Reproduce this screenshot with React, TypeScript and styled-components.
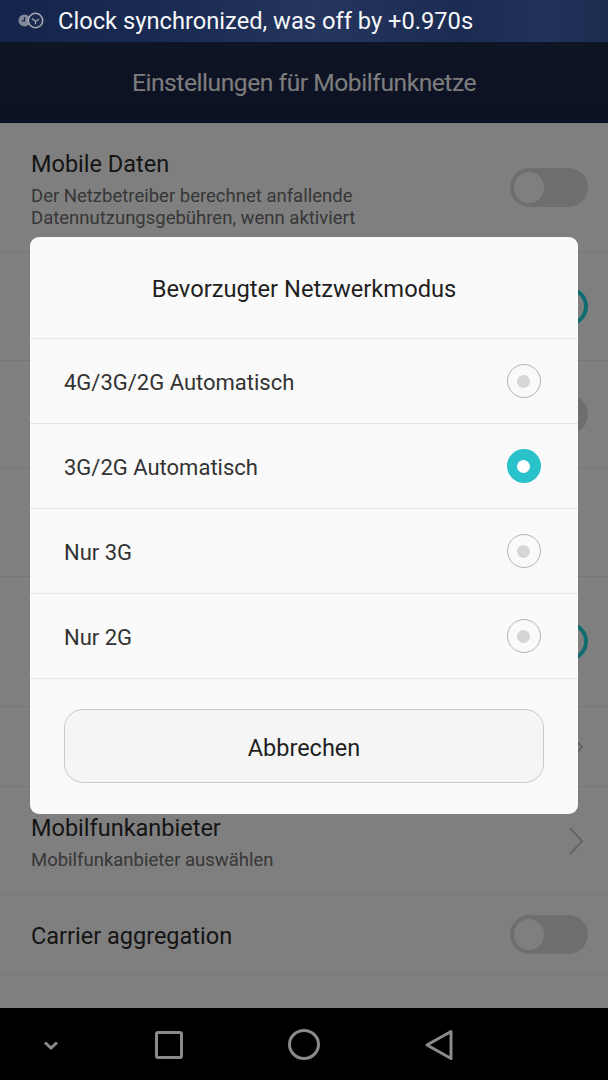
import styled, { createGlobalStyle } from "styled-components";

const GlobalStyle = createGlobalStyle`
  html, body {
    margin: 0;
    padding: 0;
    background: #000;
  }
  * {
    box-sizing: border-box;
  }
`;

const Phone = styled.div`
  position: relative;
  width: 608px;
  height: 1080px;
  display: flex;
  flex-direction: column;
  overflow: hidden;
  font-family: Roboto, "Liberation Sans", sans-serif;
`;

const StatusBar = styled.div`
  height: 42px;
  flex: none;
  display: flex;
  align-items: center;
  gap: 14px;
  padding: 0 0 0 18px;
  color: #f6f7f9;
  font-size: 23.7px;
  background: linear-gradient(90deg, #15244a 0%, #1a2b54 30%, #25365e 52%, #1b2b52 76%, #22335b 90%, #1c2c50 100%);
`;

const Screen = styled.div`
  position: relative;
  flex: 1;
  display: flex;
  flex-direction: column;
  min-height: 0;
`;

const Header = styled.div`
  height: 81px;
  flex: none;
  display: flex;
  align-items: center;
  justify-content: center;
  font-size: 24.6px;
  letter-spacing: -0.45px;
  color: #fafafa;
  background: linear-gradient(180deg, #1e2a48 0%, #182447 100%);
`;

const List = styled.div`
  flex: 1;
  background: #ffffff;
`;

const Row = styled.div<{ $height: number }>`
  height: ${(p) => p.$height}px;
  display: flex;
  align-items: center;
  justify-content: space-between;
  padding: 0 20px 0 31px;
  border-bottom: 1px solid #ececec;
`;

const RowText = styled.div`
  display: flex;
  flex-direction: column;
  gap: 7px;
  padding-top: 3px;
`;

const RowTitle = styled.div`
  font-size: 23.5px;
  color: #2a2a2a;
`;

const RowDesc = styled.div`
  font-size: 18.5px;
  line-height: 22px;
  color: #6e6e6e;
`;

const Toggle = styled.div<{ $on?: boolean }>`
  position: relative;
  width: 78px;
  height: 39px;
  border-radius: 20px;
  flex: none;
  background: ${(p) => (p.$on ? "#ffffff" : "#dcdcdc")};
  border: ${(p) => (p.$on ? "4px solid #22d8e0" : "none")};

  &::after {
    content: "";
    position: absolute;
    left: 4px;
    top: 4px;
    width: 30px;
    height: 31px;
    border-radius: 50%;
    background: #ffffff;
    display: ${(p) => (p.$on ? "none" : "block")};
  }
`;

const Chevron = styled.svg`
  width: 16px;
  height: 28px;
  margin-right: 4px;
  flex: none;
`;

const Scrim = styled.div`
  position: absolute;
  inset: 0;
  background: rgba(0, 0, 0, 0.5);
`;

const Dialog = styled.div`
  position: absolute;
  left: 30px;
  top: 195px;
  width: 548px;
  height: 577px;
  background: #fafafa;
  border-radius: 9px;
  display: flex;
  flex-direction: column;
`;

const DialogTitle = styled.div`
  height: 102px;
  flex: none;
  display: flex;
  align-items: center;
  justify-content: center;
  padding-top: 2px;
  font-size: 23.7px;
  color: #1f1f1f;
  border-bottom: 1px solid #e6e6e6;
`;

const Option = styled.div`
  height: 85px;
  flex: none;
  display: flex;
  align-items: center;
  justify-content: space-between;
  padding: 0 37.5px 0 34px;
  font-size: 22px;
  color: #333;
  border-bottom: 1px solid #e6e6e6;
`;

const OptionLabel = styled.span`
  padding-top: 2px;
`;

const Radio = styled.span<{ $checked?: boolean }>`
  width: 34px;
  height: 34px;
  border-radius: 50%;
  display: flex;
  align-items: center;
  justify-content: center;
  background: ${(p) => (p.$checked ? "#29c1ca" : "transparent")};
  border: ${(p) => (p.$checked ? "none" : "1px solid #b4b4b4")};

  &::after {
    content: "";
    width: 13px;
    height: 13px;
    border-radius: 50%;
    background: ${(p) => (p.$checked ? "#ffffff" : "#d6d6d6")};
  }
`;

const CancelButton = styled.button`
  margin: 30px 34px 0;
  height: 74px;
  padding: 3px 0 0;
  border: 1px solid #c9c9c9;
  border-radius: 19px;
  background: #f5f5f5;
  font-family: inherit;
  font-size: 23.5px;
  color: #1f1f1f;
`;

const NavBar = styled.div`
  height: 72px;
  flex: none;
  background: #000;
  display: grid;
  grid-template-columns: 101px 135px 135px 135px 1fr;
  align-items: center;
  justify-items: center;
`;

const NavIcon = styled.svg`
  width: 40px;
  height: 40px;
  fill: none;
  stroke: #8a8a8a;
  stroke-width: 3;
`;

const ClockIcon = () => (
  <svg width="26" height="22" viewBox="0 0 26 22">
    <circle cx="6.5" cy="10.5" r="6" fill="#83899a" />
    <path d="M6.5 7v3.8H3.5" fill="none" stroke="#1a2a50" strokeWidth="1.3" />
    <circle cx="17.5" cy="10.5" r="7.2" fill="#1a2a50" stroke="#a7abb5" strokeWidth="1.5" />
    <path d="M14 8.6l3.5 2.6 3.6-2M17.5 11.2v3" fill="none" stroke="#a7abb5" strokeWidth="1.2" />
  </svg>
);

const ChevronIcon = () => (
  <Chevron viewBox="0 0 16 28" fill="none" stroke="#bbbbbb" strokeWidth="1.6">
    <path d="M2 1l12 13L2 27" />
  </Chevron>
);

const options = [
  { label: "4G/3G/2G Automatisch" },
  { label: "3G/2G Automatisch", checked: true },
  { label: "Nur 3G" },
  { label: "Nur 2G" },
];

export default function App() {
  return (
    <Phone>
      <GlobalStyle />
      <StatusBar>
        <ClockIcon />
        <span>Clock synchronized, was off by +0.970s</span>
      </StatusBar>
      <Screen>
        <Header>Einstellungen für Mobilfunknetze</Header>
        <List>
          <Row $height={130}>
            <RowText>
              <RowTitle>Mobile Daten</RowTitle>
              <RowDesc>
                Der Netzbetreiber berechnet anfallende
                <br />
                Datennutzungsgebühren, wenn aktiviert
              </RowDesc>
            </RowText>
            <Toggle />
          </Row>
          <Row $height={108}>
            <span />
            <Toggle $on />
          </Row>
          <Row $height={108}>
            <span />
            <Toggle />
          </Row>
          <Row $height={108}>
            <span />
          </Row>
          <Row $height={130}>
            <span />
            <Toggle $on />
          </Row>
          <Row $height={80}>
            <span />
            <ChevronIcon />
          </Row>
          <Row $height={108}>
            <RowText>
              <RowTitle>Mobilfunkanbieter</RowTitle>
              <RowDesc>Mobilfunkanbieter auswählen</RowDesc>
            </RowText>
            <ChevronIcon />
          </Row>
          <Row $height={80}>
            <RowText>
              <RowTitle>Carrier aggregation</RowTitle>
            </RowText>
            <Toggle />
          </Row>
        </List>
        <Scrim />
        <Dialog>
          <DialogTitle>Bevorzugter Netzwerkmodus</DialogTitle>
          {options.map((o) => (
            <Option key={o.label}>
              <OptionLabel>{o.label}</OptionLabel>
              <Radio $checked={o.checked} />
            </Option>
          ))}
          <CancelButton>Abbrechen</CancelButton>
        </Dialog>
      </Screen>
      <NavBar>
        <NavIcon viewBox="0 0 40 40">
          <path d="M14 18.5l6 5.5 6-5.5" />
        </NavIcon>
        <NavIcon viewBox="0 0 40 40">
          <rect x="7.5" y="8.5" width="25" height="25" rx="1.5" />
        </NavIcon>
        <NavIcon viewBox="0 0 40 40">
          <ellipse cx="20" cy="20.5" rx="14.5" ry="14" />
        </NavIcon>
        <NavIcon viewBox="0 0 40 40">
          <path d="M32 7.5L8 21l24 13.5z" strokeLinejoin="round" />
        </NavIcon>
        <span />
      </NavBar>
    </Phone>
  );
}
